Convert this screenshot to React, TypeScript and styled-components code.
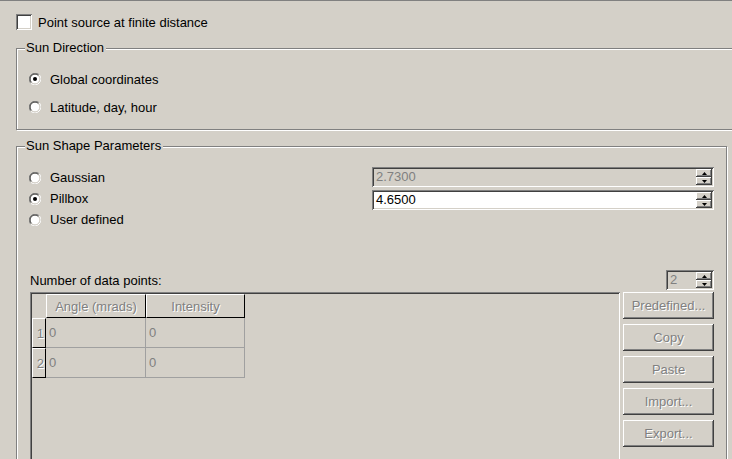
import React from "react";
import styled, { createGlobalStyle, css } from "styled-components";

const Global = createGlobalStyle`
  html, body { margin: 0; padding: 0; background: #d4d0c8; }
  body { font-family: "Liberation Sans", Arial, sans-serif; font-size: 13px; color: #000; }
`;

const Root = styled.div`
  width: 732px;
  height: 459px;
  overflow: hidden;
  background: #d4d0c8;
  border-top: 1px solid #808080;
  box-sizing: border-box;
`;

const CheckRow = styled.label`
  display: flex;
  align-items: center;
  gap: 6px;
  margin: 13px 0 0 16px;
  height: 16px;
`;

const CheckBox = styled.span`
  width: 16px;
  height: 16px;
  box-sizing: border-box;
  background: #fff;
  box-shadow: inset 1px 1px 0 #808080, inset -1px -1px 0 #fff, inset 2px 2px 0 #404040, inset -2px -2px 0 #d4d0c8;
  border: none;
`;

const Group = styled.div<{ $w: number; $h: number; $mt: number }>`
  position: relative;
  box-sizing: border-box;
  margin: ${(p) => p.$mt}px 0 0 16px;
  width: ${(p) => p.$w}px;
  height: ${(p) => p.$h}px;
  border: 1px solid #808080;
  box-shadow: 1px 1px 0 #fff, inset 1px 1px 0 #fff;
`;

const Legend = styled.span`
  position: absolute;
  left: 8px;
  top: -9px;
  padding: 0 2px 0 1px;
  line-height: 16px;
  background: #d4d0c8;
`;

const RadioList = styled.div<{ $gap: number; $row: number }>`
  display: flex;
  flex-direction: column;
  gap: ${(p) => p.$gap}px;
  & > * { height: ${(p) => p.$row}px; }
`;

const RadioRow = styled.label`
  display: flex;
  align-items: center;
  gap: 9px;
`;

const Radio = ({ checked }: { checked?: boolean }) => (
  <svg width="12" height="12" viewBox="0 0 12 12" style={{ flex: "none" }}>
    <path d="M10.24 1.76 A6 6 0 0 0 1.76 10.24" fill="none" stroke="#808080" strokeWidth="1" />
    <path d="M1.76 10.24 A6 6 0 0 0 10.24 1.76" fill="none" stroke="#ffffff" strokeWidth="1" />
    <circle cx="6" cy="6" r="4.5" fill="#fff" />
    <path d="M9.5 2.5 A4.9 4.9 0 0 0 2.5 9.5" fill="none" stroke="#404040" strokeWidth="1" />
    <path d="M2.5 9.5 A4.9 4.9 0 0 0 9.5 2.5" fill="none" stroke="#d4d0c8" strokeWidth="1" />
    {checked && <circle cx="6" cy="6" r="2" fill="#000" />}
  </svg>
);

const DirBody = styled.div`
  padding: 20px 0 0 12px;
`;

const ShapeBody = styled.div`
  padding: 20px 12px 0 12px;
`;

const ShapeGrid = styled.div`
  display: grid;
  grid-template-columns: 1fr 342px;
  column-gap: 0;
`;

const FieldCol = styled.div`
  display: flex;
  flex-direction: column;
  gap: 3px;
`;

const Field = styled.div<{ $disabled?: boolean; $w?: number }>`
  position: relative;
  box-sizing: border-box;
  height: 20px;
  width: ${(p) => (p.$w ? `${p.$w}px` : "auto")};
  display: flex;
  align-items: center;
  padding: 2px 2px 2px 4px;
  background: ${(p) => (p.$disabled ? "#d4d0c8" : "#fff")};
  color: ${(p) => (p.$disabled ? "#808080" : "#000")};
  box-shadow: inset 1px 1px 0 #808080, inset -1px -1px 0 #fff, inset 2px 2px 0 #404040, inset -2px -2px 0 #d4d0c8;
`;

const FieldText = styled.span`
  flex: 1;
  line-height: 16px;
`;

const SpinCol = styled.div`
  display: flex;
  flex-direction: column;
  width: 16px;
  height: 16px;
`;

const raised = css`
  box-shadow: inset -1px -1px 0 #404040, inset 1px 1px 0 #fff, inset -2px -2px 0 #808080, inset 2px 2px 0 #d4d0c8;
`;

const SpinBtn = styled.div`
  flex: 1;
  background: #d4d0c8;
  ${raised}
  display: flex;
  align-items: center;
  justify-content: center;
`;

const Arrow = ({ up }: { up?: boolean }) => (
  <svg width="5" height="3" viewBox="0 0 5 3">
    <path d={up ? "M2.5 0 L5 3 L0 3 Z" : "M0 0 L5 0 L2.5 3 Z"} fill="#000" />
  </svg>
);

const Spin = () => (
  <SpinCol>
    <SpinBtn><Arrow up /></SpinBtn>
    <SpinBtn><Arrow /></SpinBtn>
  </SpinCol>
);

const CountRow = styled.div`
  display: flex;
  align-items: center;
  justify-content: space-between;
  margin-top: 40px;
  padding-left: 1px;
  height: 20px;
`;

const TableRow = styled.div`
  display: flex;
  gap: 3px;
  margin-top: 2px;
  margin-left: 1px;
`;

const TableFrame = styled.div`
  flex: 1;
  height: 200px;
  box-sizing: border-box;
  padding: 2px;
  box-shadow: inset 1px 1px 0 #808080, inset -1px -1px 0 #fff, inset 2px 2px 0 #404040, inset -2px -2px 0 #d4d0c8;
`;

const Grid = styled.div`
  display: grid;
  grid-template-columns: 14px 100px 99px;
  grid-auto-rows: 30px;
  grid-template-rows: 24px;
  width: max-content;
`;

const embossed = css`
  color: #808080;
  text-shadow: 1px 1px 0 #fff;
`;

const HeadCell = styled.div<{ $row?: boolean }>`
  box-sizing: border-box;
  display: flex;
  align-items: center;
  justify-content: ${(p) => (p.$row ? "flex-end" : "center")};
  padding-right: ${(p) => (p.$row ? "1px" : "0")};
  border-top: 1px solid #fff;
  border-left: 1px solid #fff;
  border-right: 1px solid #000;
  border-bottom: 1px solid #000;
  ${embossed}
`;

const Corner = styled.div``;

const DataCell = styled.div`
  box-sizing: border-box;
  display: flex;
  align-items: center;
  padding-left: 3px;
  border-right: 1px solid #a0a0a0;
  border-bottom: 1px solid #a0a0a0;
  color: #808080;
`;

const Buttons = styled.div`
  display: flex;
  flex-direction: column;
  gap: 5px;
  width: 91px;
`;

const Button = styled.div`
  height: 27px;
  box-sizing: border-box;
  display: flex;
  align-items: center;
  justify-content: center;
  background: #d4d0c8;
  ${raised}
  ${embossed}
`;

export default function App() {
  return (
    <>
      <Global />
      <Root>
        <CheckRow>
          <CheckBox />
          <span>Point source at finite distance</span>
        </CheckRow>

        <Group $w={760} $h={82} $mt={18}>
          <Legend>Sun Direction</Legend>
          <DirBody>
            <RadioList $gap={8} $row={20}>
              <RadioRow><Radio checked /><span>Global coordinates</span></RadioRow>
              <RadioRow><Radio /><span>Latitude, day, hour</span></RadioRow>
            </RadioList>
          </DirBody>
        </Group>

        <Group $w={711} $h={340} $mt={16}>
          <Legend>Sun Shape Parameters</Legend>
          <ShapeBody>
            <ShapeGrid>
              <RadioList $gap={0} $row={21}>
                <RadioRow><Radio /><span>Gaussian</span></RadioRow>
                <RadioRow><Radio checked /><span>Pillbox</span></RadioRow>
                <RadioRow><Radio /><span>User defined</span></RadioRow>
              </RadioList>
              <FieldCol>
                <Field $disabled>
                  <FieldText>2.7300</FieldText>
                  <Spin />
                </Field>
                <Field>
                  <FieldText>4.6500</FieldText>
                  <Spin />
                </Field>
              </FieldCol>
            </ShapeGrid>

            <CountRow>
              <span>Number of data points:</span>
              <Field $disabled $w={48}>
                <FieldText>2</FieldText>
                <Spin />
              </Field>
            </CountRow>

            <TableRow>
              <TableFrame>
                <Grid>
                  <Corner />
                  <HeadCell>Angle (mrads)</HeadCell>
                  <HeadCell>Intensity</HeadCell>
                  <HeadCell $row>1</HeadCell>
                  <DataCell>0</DataCell>
                  <DataCell>0</DataCell>
                  <HeadCell $row>2</HeadCell>
                  <DataCell>0</DataCell>
                  <DataCell>0</DataCell>
                </Grid>
              </TableFrame>
              <Buttons>
                <Button>Predefined...</Button>
                <Button>Copy</Button>
                <Button>Paste</Button>
                <Button>Import...</Button>
                <Button>Export...</Button>
              </Buttons>
            </TableRow>
          </ShapeBody>
        </Group>
      </Root>
    </>
  );
}
